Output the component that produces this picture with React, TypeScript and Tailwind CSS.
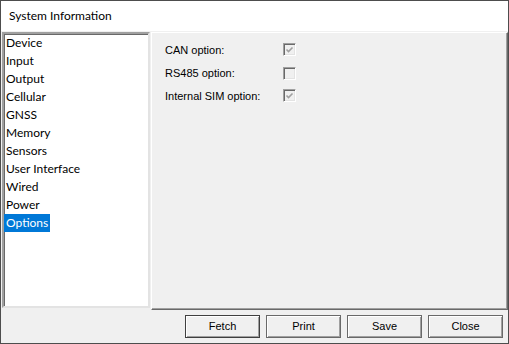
import React from "react";

const items = ["Device","Input","Output","Cellular","GNSS","Memory","Sensors","User Interface","Wired","Power","Options"];

function Check({ checked }: { checked: boolean }) {
  return (
    <div className="w-[13px] h-[13px] border border-t-[#a0a0a0] border-l-[#a0a0a0] border-r-[#ffffff] border-b-[#ffffff] shadow-[inset_1px_1px_0_#696969,inset_-1px_-1px_0_#e3e3e3] bg-[#f0f0f0] flex items-center justify-center">
      {checked && (
        <svg width="9" height="9" viewBox="0 0 9 9" className="mt-[1px]">
          <path d="M1.5 3.5 L3.5 5.5 L7.5 1.5" stroke="#a0a0a0" strokeWidth="1.6" fill="none" />
        </svg>
      )}
    </div>
  );
}

function Btn({ label, def }: { label: string; def?: boolean }) {
  return (
    <div
      className={
        "w-[75px] h-[23px] flex items-center justify-center bg-[#f0f0f0] border text-[11px] text-black " +
        (def
          ? "border-[#404040] shadow-[inset_1px_1px_0_#ffffff,inset_-1px_-1px_0_#a0a0a0]"
          : "border-[#696969] shadow-[inset_1px_1px_0_#ffffff,inset_-1px_-1px_0_#a0a0a0]")
      }
      style={{ fontFamily: '"Liberation Sans", Arial, sans-serif' }}
    >
      {label}
    </div>
  );
}

export default function App() {
  return (
    <div className="w-[509px] h-[344px] border border-[#4d4d4d] bg-[#f0f0f0] flex flex-col overflow-hidden">
      <div
        className="h-[30px] bg-white flex items-center pl-[8px] text-[12px] text-black"
        style={{ fontFamily: 'Lato, "Noto Sans", sans-serif' }}
      >
        System Information
      </div>
      <div className="flex-1 flex flex-col pt-[1px] pl-[1px] pr-[0px]">
        <div className="flex gap-[1px]">
          <div
            className="w-[148px] h-[276px] bg-white border-2 border-t-[#a0a0a0] border-l-[#a0a0a0] border-r-[#e3e3e3] border-b-[#e3e3e3] shadow-[inset_1px_1px_0_#696969]"
            style={{ fontFamily: 'Lato, "Noto Sans", sans-serif' }}
          >
            {items.map((it) => (
              <div key={it} className="h-[18px] flex items-center text-[12px] leading-[18px]">
                <span
                  className={
                    "px-[2px] h-[18px] " +
                    (it === "Options" ? "bg-[#0078d7] text-white" : "text-black")
                  }
                >
                  {it}
                </span>
              </div>
            ))}
          </div>
          <div
            className="w-[357px] h-[278px] border border-t-[#ffffff] border-l-[#ffffff] border-r-[#696969] border-b-[#696969] shadow-[inset_-1px_-1px_0_#a0a0a0] bg-[#f0f0f0] pt-[10px] pl-[13px] text-[11px] text-black"
            style={{ fontFamily: '"Liberation Sans", Arial, sans-serif' }}
          >
            <div className="flex items-center h-[13px]">
              <div className="w-[118px] mt-[2px]">CAN option:</div>
              <Check checked />
            </div>
            <div className="flex items-center h-[13px] mt-[11px]">
              <div className="w-[118px]">RS485 option:</div>
              <Check checked={false} />
            </div>
            <div className="flex items-center h-[13px] mt-[9px]">
              <div className="w-[118px] mt-[1px]">Internal SIM option:</div>
              <Check checked />
            </div>
          </div>
        </div>
        <div className="flex justify-end gap-[6px] pr-[5px] mt-[5px]">
          <Btn label="Fetch" def />
          <Btn label="Print" />
          <Btn label="Save" />
          <Btn label="Close" />
        </div>
      </div>
    </div>
  );
}
